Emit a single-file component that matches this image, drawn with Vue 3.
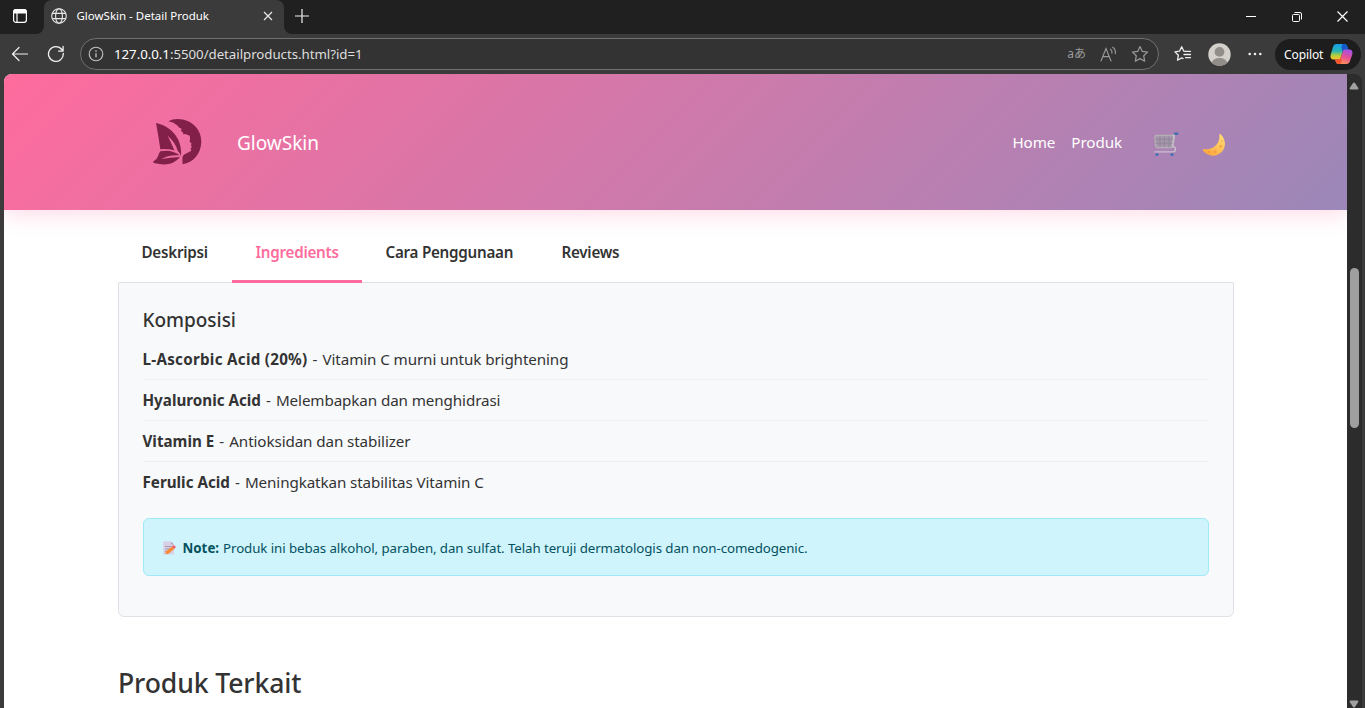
<script setup>
const tabs = [
  { label: 'Deskripsi', width: 114 },
  { label: 'Ingredients', width: 130, active: true },
  { label: 'Cara Penggunaan', width: 176 },
  { label: 'Reviews', width: 106 },
]
const ingredients = [
  { name: 'L-Ascorbic Acid (20%)', text: 'Vitamin C murni untuk brightening', wide: true },
  { name: 'Hyaluronic Acid', text: 'Melembapkan dan menghidrasi' },
  { name: 'Vitamin E', text: 'Antioksidan dan stabilizer' },
  { name: 'Ferulic Acid', text: 'Meningkatkan stabilitas Vitamin C' },
]
</script>

<template>
  <div class="window">
    <div class="tabstrip">
      <div class="workspace">
        <svg width="16" height="16" viewBox="0 0 16 16" fill="none" stroke="#fff" stroke-width="1.2">
          <rect x="1.6" y="1.6" width="12.8" height="12.8" rx="2.4" />
          <path d="M1.6 4.4V4a2.4 2.4 0 0 1 2.4-2.4h8A2.4 2.4 0 0 1 14.4 4v.9H1.6z" fill="#fff" />
          <path d="M5 5v9" />
        </svg>
      </div>
      <div class="browser-tab">
        <svg width="16" height="16" viewBox="0 0 16 16" fill="none" stroke="#e8e8e8" stroke-width="1.1">
          <circle cx="8" cy="8" r="7.3" /><ellipse cx="8" cy="8" rx="3.4" ry="7.3" />
          <path d="M1.3 5.4h13.4M1.3 10.6h13.4" />
        </svg>
        <span class="tab-title">GlowSkin - Detail Produk</span>
        <svg class="tab-close" width="10" height="10" viewBox="0 0 10 10" stroke="#e8e8e8" stroke-width="1.2"><path d="M1 1l8 8M9 1L1 9" /></svg>
      </div>
      <div class="newtab">
        <svg width="14" height="14" viewBox="0 0 14 14" stroke="#f2f2f2" stroke-width="1.2"><path d="M7 0v14M0 7h14" /></svg>
      </div>
      <div class="controls">
        <span><svg width="10" height="10" viewBox="0 0 10 10" stroke="#fff"><path d="M0 4.5h10" /></svg></span>
        <span><svg width="10" height="10" viewBox="0 0 10 10" fill="none" stroke="#fff"><rect x=".5" y="2.5" width="7" height="7" rx="1" /><path d="M2.5.5H8A1.5 1.5 0 0 1 9.5 2v5.5" /></svg></span>
        <span><svg width="11" height="11" viewBox="0 0 11 11" stroke="#fff" stroke-width="1.2"><path d="M.5.5l10 10M10.5.5l-10 10" /></svg></span>
      </div>
    </div>

    <div class="toolbar">
      <div class="btn">
        <svg width="18" height="16" viewBox="0 0 18 16" fill="none" stroke="#f0f0f0" stroke-width="1.2" stroke-linecap="round" stroke-linejoin="round"><path d="M16.5 8H1.500M8 1.500L1.500 8 8 14.500" /></svg>
      </div>
      <div class="btn">
        <svg width="18" height="18" viewBox="0 0 18 18" fill="none" stroke="#f0f0f0" stroke-width="1.3" stroke-linecap="round" stroke-linejoin="round"><path d="M16.300 8.500A7.400 7.400 0 1 1 14.800 4.500L16 6M16.100 1.500V6.100H11.600" /></svg>
      </div>
      <div class="address">
        <svg class="info" width="16" height="16" viewBox="0 0 16 16" fill="none" stroke="#c4c4c4" stroke-width="1.1"><circle cx="8" cy="8" r="6.800" /><path d="M8 7.200v4" stroke-width="1.300" /><circle cx="8" cy="5" r=".85" fill="#c4c4c4" stroke="none" /></svg>
        <span class="url"><b>127.0.0.1</b>:5500/detailproducts.html?id=1</span>
        <span class="translate">aあ</span>
        <svg class="read" width="18" height="16" viewBox="0 0 18 16" fill="none" stroke="#9a9a9a" stroke-width="1.1" stroke-linecap="round"><path d="M1 15L6 2.500 11 15M2.800 10.600h6.400M10.500 3.200q1.800 1.600 1.400 4M12.800 1.200q3.400 2.600 2.500 6.600" /></svg>
        <svg width="18" height="18" viewBox="0 0 18 18" fill="none" stroke="#9a9a9a" stroke-width="1.200" stroke-linejoin="round"><path d="M9 1.500l2.300 4.900 5.300.7-3.900 3.700 1 5.400L9 13.600l-4.700 2.600 1-5.400L1.400 7.100l5.300-.7z" /></svg>
      </div>
      <div class="btn fav">
        <svg width="18" height="18" viewBox="0 0 18 18" fill="none" stroke="#f0f0f0" stroke-width="1.300" stroke-linejoin="round" stroke-linecap="round"><path d="M11.300 6.300L9.700 6.100 7.700 1.800 5.500 6.200.9 6.900l3.500 3.300-.9 5 4.300-2.300 1.300.6M11.500 6.300h5M10 9.500h6.500M11.500 12.700h5" /></svg>
      </div>
      <div class="btn">
        <svg width="23" height="23" viewBox="0 0 23 23"><defs><clipPath id="face"><circle cx="11.500" cy="11.500" r="11.200" /></clipPath></defs><g clip-path="url(#face)"><rect width="23" height="23" fill="#d4d1cd" /><circle cx="11.500" cy="8.900" r="4.900" fill="#918d89" /><ellipse cx="11.500" cy="20" rx="7.600" ry="4.900" fill="#918d89" /></g></svg>
      </div>
      <div class="btn">
        <svg width="14" height="4" viewBox="0 0 14 4" fill="#f0f0f0"><circle cx="1.700" cy="2" r="1.300" /><circle cx="7" cy="2" r="1.300" /><circle cx="12.300" cy="2" r="1.300" /></svg>
      </div>
      <div class="copilot">
        <span>Copilot</span>
        <svg width="23" height="22" viewBox="0 0 23 22">
          <defs>
            <linearGradient id="cl" x1="0" y1="0" x2="0" y2="1"><stop offset="0" stop-color="#159fea" /><stop offset=".45" stop-color="#26b4b5" /><stop offset=".75" stop-color="#b7cf39" /><stop offset="1" stop-color="#ffc42c" /></linearGradient>
            <linearGradient id="cr" x1=".7" y1="0" x2=".3" y2="1"><stop offset="0" stop-color="#a451e8" /><stop offset=".5" stop-color="#e84f91" /><stop offset="1" stop-color="#ff9a54" /></linearGradient>
          </defs>
          <path d="M6.500 1h8c2 0 2.400 1.500 3 3l.8 2.500h-3c-1.500 0-2.200.8-2.700 2.500L11 14c-.6 2-1.500 2.500-3 2.500H3.500C1 16.500 0 14.500.7 11.500L3 4c.7-2.200 1.700-3 3.500-3z" fill="url(#cl)" />
          <path d="M13.500 1h1c2 0 2.400 1.500 3 3l.8 2.500h-3c-1.500 0-2.200.8-2.700 2.500l-1-4C11.300 3 11.700 1 13.500 1z" fill="#1658cc" />
          <path d="M16.500 21h-8c-2 0-2.400-1.500-3-3l-.5-1.500h3c1.500 0 2.400-.6 3-2.500l1.600-5c.5-1.700 1.200-2.500 2.700-2.500h4.200c2.500 0 3.500 2 2.800 5L20 18c-.7 2.200-1.700 3-3.500 3z" fill="url(#cr)" />
          <path d="M9.500 21h-1c-2 0-2.400-1.500-3-3L5 16.500h3c1.500 0 2.400-.6 3-2.500l.6 3c.3 2-.3 4-2.100 4z" fill="#f4572f" />
        </svg>
      </div>
    </div>

    <div class="viewport">
      <div class="page">
        <header class="site-header">
          <svg class="logo" width="51" height="50" viewBox="66 50 153 150" fill="#82204a">
            <path d="M115 63Q132 54 151 57C187 60 215 89 214 126C212 162 190 187 158 192C157 182 157 174 158 168Q162 161 173 157L184 151L182 145L185 140L183 134L185 130L179 124Q182 113 179 106L172 103L165 101Q156 103 160 97L153 92L155 85Q145 82 143 76Q132 66 115 63Z" />
            <path d="M78 68C109 75 132 92 145 119Q155 141 153 167Q149 156 143 151Q136 126 113 106Q124 128 133 150Q108 144 91 147Q86 111 78 68Z" />
            <path d="M91 153Q124 146 149 165Q116 162 94 176Q120 172 150 170Q125 202 72 188L69 184Q81 178 84 168Q87 157 91 153Z" />
          </svg>
          <span class="brand">GlowSkin</span>
          <nav>
            <a>Home</a>
            <a>Produk</a>
            <svg class="cart" width="26" height="25" viewBox="0 0 26 25" fill="none" stroke-linecap="round" stroke-linejoin="round">
              <path d="M2.500 3.500h19l-1.500 10.500q-.3 1.500-2 1.500H4.300q-1.500 0-1.600-1.500L2 5z" fill="#a39aa9" fill-opacity=".75" stroke="#b5b2b4" stroke-width="1.400" />
              <path d="M7 4v11M11.500 4v11M16 4v11M2.500 7.300h18.200M2.800 11.300h17.300" stroke="#8b8592" stroke-width=".7" />
              <path d="M23.500 1.600l-2.200.8-1.900 11.800 2.800 1.500q1 3.300-1.600 4.200H2" stroke="#c9c0ca" stroke-width="1.400" />
              <path d="M22.200 1.700h2" stroke="#426fae" stroke-width="2.600" />
              <circle cx="4" cy="22.500" r="1.600" fill="#426fb5" /><circle cx="19" cy="22.500" r="1.600" fill="#426fb5" />
            </svg>
            <svg class="moon" width="24" height="24" viewBox="0 0 24 24">
              <defs><linearGradient id="moon" x1=".9" y1=".1" x2=".2" y2="1"><stop offset="0" stop-color="#ffdb72" /><stop offset="1" stop-color="#ffa63e" /></linearGradient></defs>
              <path d="M17.300 1.200Q18.200.6 19 1.500C26 9 23 19.500 14.500 22.200C8.500 24 3 20.500.8 17.300Q.4 16 1.800 16C11 17.500 18.500 10.500 17.300 1.200Z" fill="url(#moon)" />
              <circle cx="18.800" cy="13.200" r="1.500" fill="#f3ab48" /><circle cx="13" cy="18.700" r="1.600" fill="#f5a143" /><circle cx="20.200" cy="8" r="1" fill="#f5b557" /><circle cx="7" cy="19" r="1" fill="#f3963c" />
            </svg>
          </nav>
        </header>

        <main>
          <ul class="tabs">
            <li v-for="t in tabs" :key="t.label" :class="{ active: t.active }" :style="{ width: t.width + 'px' }">{{ t.label }}</li>
          </ul>
          <section class="panel">
            <h5>Komposisi</h5>
            <ul class="list">
              <li v-for="i in ingredients" :key="i.name"><strong :class="{ wide: i.wide }">{{ i.name }}</strong><span class="dash">-</span>{{ i.text }}</li>
            </ul>
            <div class="note">
              <svg width="13" height="14" viewBox="0 0 13 14"><path d="M.3.500h7.700l3 3v10H.3z" fill="#d8cfe2" /><path d="M8 .5v3h3z" fill="#b4a5c4" /><path d="M2 5.500h6.500M2 8h5M2 10.500h3" stroke="#a798b7" stroke-width="1" /><path d="M2.300 13.300l.8-3L9 5.500l2.400 2.300-5.900 5z" fill="#f98b38" /><path d="M9 5.500l1.200-1q1.200-.3 2.100.8.700 1-.1 1.800l-.8.700z" fill="#ef5766" /></svg>
              <strong>Note:</strong>
              <span>Produk ini bebas alkohol, paraben, dan sulfat. Telah teruji dermatologis dan non-comedogenic.</span>
            </div>
          </section>
          <h3>Produk Terkait</h3>
        </main>
      </div>
      <div class="scrollbar">
        <svg width="10" height="8" viewBox="0 0 10 8" fill="#a0a0a0"><path d="M4 1q1-1 2 0l3.300 5q.5 1.200-.8 1.500h-7Q.2 7.200.7 6z" /></svg>
        <div class="thumb"></div>
        <svg class="down" width="10" height="8" viewBox="0 0 10 8" fill="#a0a0a0"><path d="M4 7q1 1 2 0l3.300-5Q9.800.8 8.500.5h-7Q.2.800.7 2z" /></svg>
      </div>
    </div>
  </div>
</template>

<style>
html, body { margin: 0; overflow: hidden; background: #3b3b3b; }
</style>

<style scoped>
* { box-sizing: border-box; }
ul, h3, h5 { margin: 0; padding: 0; list-style: none; }
svg { display: block; flex: none; }
.window { width: 1365px; height: 708px; overflow: hidden; display: flex; flex-direction: column; background: #3b3b3b; font-family: "Noto Sans", "Noto Sans CJK JP", sans-serif; color: #333; white-space: nowrap; }

.tabstrip { height: 34px; flex: none; display: flex; background: #202020; }
.workspace { width: 44px; padding: 8px 12px; background: #202020; border-bottom-right-radius: 8px; box-shadow: 8px 8px 0 8px #3b3b3b; clip-path: inset(0); }
.browser-tab { width: 240px; display: flex; align-items: center; padding: 0 10px 2px 7px; background: #3b3b3b; border-radius: 8px 8px 0 0; }
.tab-title { margin: -2px 0 0 9.500px; font-size: 11.5px; color: #fff; }
.tab-close { margin-left: auto; margin-right: 1px; }
.newtab { flex: 1; padding: 9px 11px; background: #202020; border-bottom-left-radius: 8px; box-shadow: -8px 8px 0 8px #3b3b3b; clip-path: inset(0); }
.controls { display: flex; width: 137px; }
.controls span { width: 46px; height: 34px; flex: none; display: flex; align-items: center; justify-content: center; }
.controls span:last-child { width: 45px; padding-bottom: 1px; }

.toolbar { height: 40px; flex: none; display: flex; align-items: center; padding-left: 2px; }
.btn { width: 36px; flex: none; display: flex; justify-content: center; }
.address { width: 1079px; height: 32px; margin-left: 6px; display: flex; align-items: center; padding: 0 9px 0 7px; border: 1px solid #707070; border-radius: 16px; background: #333; }
.url { margin-left: 10px; font-size: 13.3px; letter-spacing: -.05px; color: #dedede; }
.url b { font-weight: 400; color: #fff; }
.translate { margin: -2px 0 0 auto; font-size: 12px; color: #9a9a9a; }
.read { margin: 0 13px 0 14px; }
.fav { margin-left: 6px; }
.copilot { width: 86px; height: 31px; margin-left: 2px; padding: 0 8px 0 9px; display: flex; align-items: center; justify-content: space-between; border-radius: 16px; background: #1d1d1d; color: #fff; font-size: 12px; letter-spacing: -.1px; }

.viewport { flex: 1; min-height: 0; display: flex; margin: 0 3px 0 4px; border-radius: 8px 8px 0 0; overflow: hidden; }
.page { width: 1343px; background: #fff; overflow: hidden; }
.site-header { height: 136px; display: flex; align-items: center; padding: 0 121px 0 148px; background: linear-gradient(135deg, #ff6b9d 0%, #9b88b9 100%); box-shadow: 0 4px 20px rgba(255, 107, 157, .25); color: #fff; }
.logo { margin-top: -1px; }
.brand { margin-left: 34px; margin-top: 1px; font-size: 19px; letter-spacing: 0; }
nav { margin-left: auto; display: flex; align-items: center; font-size: 15.2px; }
nav a { margin-right: 16px; letter-spacing: -.08px; }
.cart { margin: 4px 23px 0 15px; }
.moon { margin-top: 5px; }

main { padding: 0 113px 0 114px; }
.tabs { height: 72px; display: flex; }
.tabs li { height: 73px; padding: 30px 23.500px 0; font-size: 15.2px; line-height: 24px; font-weight: 600; letter-spacing: -.26px; border-bottom: 3px solid transparent; }
.tabs .active { color: #ff6b9d; border-color: #ff6b9d; position: relative; }
.panel { width: 1116px; height: 335px; padding: 24px; border: 1px solid #dee2e6; border-radius: 0 0 6px 6px; background: #f8f9fb; }
h5 { height: 32px; margin-left: -.5px; font-size: 19px; line-height: 26px; font-weight: 500; letter-spacing: -.03px; }
.list li { height: 41px; padding-top: 8px; font-size: 15.2px; line-height: 24px; letter-spacing: -.1px; border-bottom: 1px solid #eceef1; }
.list li:last-child { height: 40px; border: 0; }
.list strong { margin-left: -.5px; font-weight: 700; letter-spacing: 0; }
.list .wide { letter-spacing: .27px; }
.dash { margin: 0 5.200px 0 5px; }
.note { height: 58px; margin-top: 16px; padding: 2px 19px 0; display: flex; align-items: center; border: 1px solid #9eeaf9; border-radius: 6px; background: #cff4fc; color: #055160; font-size: 13.3px; }
.note strong { margin: 0 4px 0 6.500px; }
.note span { letter-spacing: -.09px; }
h3 { margin-top: 48px; font-size: 26.6px; line-height: 36px; font-weight: 500; letter-spacing: -.13px; }

.scrollbar { width: 15px; flex: none; display: flex; flex-direction: column; align-items: center; padding: 8px 1px 0 0; background: #2c2c2c; }
.thumb { width: 9px; height: 160px; margin-top: 178px; border-radius: 5px; background: #9f9f9f; }
.down { margin-top: auto; }
</style>
